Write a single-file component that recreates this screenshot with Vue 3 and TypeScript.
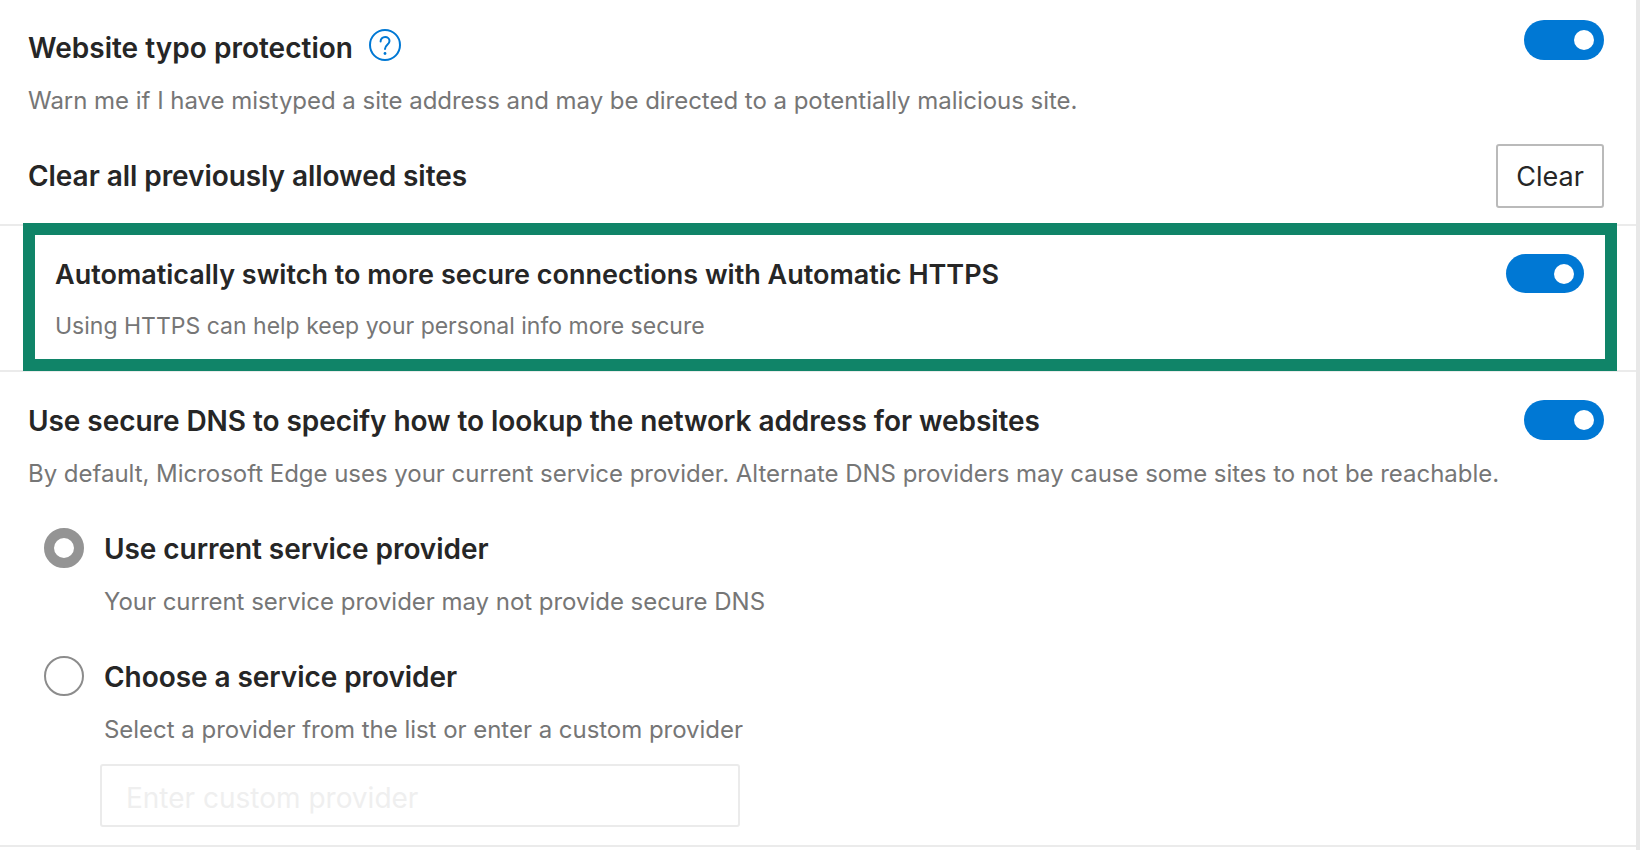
<template>
  <div class="settings">
    <section class="typo-section">
      <div class="row">
        <div class="row-text">
          <div class="title-line">
            <h3 class="title">Website typo protection</h3>
            <svg class="help-icon" viewBox="0 0 32 32" fill="none" aria-label="Help">
              <circle cx="16" cy="16" r="15" stroke="#0078d4" stroke-width="2" />
              <path d="M11.6 12.4c0-2.6 2-4.4 4.5-4.4s4.400 1.700 4.400 4c0 3.800-4.500 3.800-4.500 8" stroke="#0078d4" stroke-width="2" stroke-linecap="round" />
              <circle cx="16" cy="24.500" r="1.400" fill="#0078d4" />
            </svg>
          </div>
          <p class="desc">Warn me if I have mistyped a site address and may be directed to a potentially malicious site.</p>
        </div>
        <button class="toggle" :class="{ off: !typoOn }" @click="typoOn = !typoOn"><span class="knob"></span></button>
      </div>
      <div class="clear-row">
        <h3 class="title">Clear all previously allowed sites</h3>
        <button class="clear-btn">Clear</button>
      </div>
    </section>

    <section class="https-section">
      <div class="https-box">
        <div class="row-text">
          <h3 class="title small">Automatically switch to more secure connections with Automatic HTTPS</h3>
          <p class="desc small">Using HTTPS can help keep your personal info more secure</p>
        </div>
        <button class="toggle small" :class="{ off: !httpsOn }" @click="httpsOn = !httpsOn"><span class="knob"></span></button>
      </div>
    </section>

    <section class="dns-section">
      <div class="row">
        <div class="dns-text">
          <h3 class="title">Use secure DNS to specify how to lookup the network address for websites</h3>
          <p class="desc">By default, Microsoft Edge uses your current service provider. Alternate DNS providers may cause some sites to not be reachable.</p>
        </div>
        <button class="toggle" :class="{ off: !dnsOn }" @click="dnsOn = !dnsOn"><span class="knob"></span></button>
      </div>

      <div v-for="opt in options" :key="opt.id" class="option" @click="provider = opt.id">
        <span class="radio" :class="{ checked: provider === opt.id }"></span>
        <div class="option-text">
          <h3 class="title">{{ opt.label }}</h3>
          <p class="desc">{{ opt.hint }}</p>
        </div>
      </div>

      <input class="custom-input" type="text" placeholder="Enter custom provider" disabled />
    </section>
  </div>
</template>

<script setup lang="ts">
import { ref } from 'vue'

const typoOn = ref(true)
const httpsOn = ref(true)
const dnsOn = ref(true)
const provider = ref('current')

const options = [
  { id: 'current', label: 'Use current service provider', hint: 'Your current service provider may not provide secure DNS' },
  { id: 'custom', label: 'Choose a service provider', hint: 'Select a provider from the list or enter a custom provider' }
]
</script>

<style>
html,
body {
  background: #fff;
  overflow: hidden;
}
</style>

<style scoped>
.settings {
  width: 1640px;
  height: 850px;
  box-sizing: border-box;
  border-right: 4px solid #e8e8e8;
  background: #fff;
  font-family: Inter, "Liberation Sans", sans-serif;
  overflow: hidden;
}

.title {
  margin: 0;
  font-size: 28px;
  line-height: 40px;
  font-weight: 600;
  letter-spacing: -0.06px;
  color: #262626;
}

.title.small {
  font-size: 27px;
  letter-spacing: 0;
}

.desc {
  margin: 15px 0 0;
  font-size: 24px;
  line-height: 36px;
  letter-spacing: -0.03px;
  color: #767676;
}

.desc.small {
  margin-top: 13px;
  font-size: 23px;
  letter-spacing: 0;
}

.typo-section {
  padding: 20px 32px 16px 28px;
  height: 224px;
  box-sizing: border-box;
}

.row {
  display: flex;
  justify-content: space-between;
  align-items: flex-start;
}

.row-text {
  padding-top: 8px;
}

.title-line {
  display: flex;
  align-items: center;
  gap: 16px;
}

.title-line .title {
  letter-spacing: 0.02px;
}

.help-icon {
  width: 32px;
  height: 32px;
  margin-top: -6px;
}

.toggle {
  flex: none;
  display: flex;
  align-items: center;
  justify-content: flex-end;
  width: 80px;
  height: 40px;
  padding: 0 10px;
  border: none;
  border-radius: 20px;
  background: #0078d4;
  cursor: pointer;
}

.toggle.off {
  justify-content: flex-start;
  background: #999;
}

.toggle.small {
  width: 78px;
  height: 39px;
}

.knob {
  width: 20px;
  height: 20px;
  border-radius: 50%;
  background: #fff;
}

.clear-row {
  display: flex;
  justify-content: space-between;
  align-items: center;
  margin-top: 25px;
}

.clear-btn {
  width: 108px;
  height: 64px;
  border: 2px solid #bababa;
  border-radius: 3px;
  background: #fff;
  font: 400 27px Inter, "Liberation Sans", sans-serif;
  color: #262626;
  cursor: pointer;
}

.https-section {
  height: 148px;
  box-sizing: border-box;
  padding: 0 19px 0 23px;
  border-top: 2px solid #ebebeb;
  border-bottom: 2px solid #ebebeb;
}

.https-box {
  display: flex;
  justify-content: space-between;
  align-items: flex-start;
  height: 148px;
  margin-top: -3px;
  box-sizing: border-box;
  padding: 19px 21px 0 20px;
  border: 12px solid #108468;
}

.https-box .row-text {
  padding-top: 1px;
}

.dns-section {
  height: 475px;
  box-sizing: border-box;
  padding: 28px 32px 0 28px;
  border-bottom: 2px solid #ebebeb;
}

.dns-text {
  padding-top: 1px;
}

.option {
  display: flex;
  gap: 20px;
  padding-left: 16px;
  margin-top: 36px;
  cursor: pointer;
}

.radio {
  flex: none;
  width: 40px;
  height: 40px;
  box-sizing: border-box;
  border: 2px solid #8c8c8c;
  border-radius: 50%;
  background: #fff;
}

.radio.checked {
  border: 10px solid #949494;
}

.option-text {
  min-width: 0;
  padding-top: 1px;
}

.custom-input {
  display: block;
  width: 640px;
  height: 63px;
  box-sizing: border-box;
  margin: 16px 0 0 72px;
  padding: 4px 24px 0;
  border: 2px solid #ebebeb;
  border-radius: 3px;
  background: #fff;
  font: 400 28px Inter, "Liberation Sans", sans-serif;
}

.custom-input::placeholder {
  color: #efefef;
  opacity: 1;
}
</style>
